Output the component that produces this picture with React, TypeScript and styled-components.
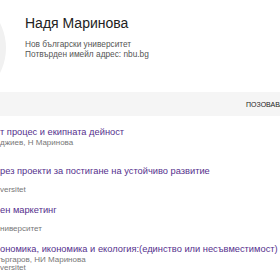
import React from "react";
import styled, { createGlobalStyle } from "styled-components";

const Global = createGlobalStyle`
  html, body { margin: 0; padding: 0; background: #fff; }
  body { font-family: "Liberation Sans", Arial, sans-serif; overflow: hidden; width: 280px; height: 280px; }
`;

const Page = styled.div`
  width: 280px;
  height: 280px;
  overflow: hidden;
  background: #fff;
`;

const Header = styled.div`
  display: flex;
  align-items: flex-start;
  height: 92px;
`;

const Avatar = styled.div`
  flex: none;
  width: 110px;
  height: 110px;
  border-radius: 50%;
  background: #f1f1f1;
  margin-left: -104px;
  margin-top: -7px;
`;

const Info = styled.div`
  margin-left: 19px;
  padding-top: 15px;
  display: flex;
  flex-direction: column;
`;

const Name = styled.div`
  font-size: 14px;
  line-height: 17px;
  color: #222;
  margin-bottom: 7px;
`;

const InfoLine = styled.div`
  font-size: 8.3px;
  line-height: 10px;
  color: #555;
  white-space: nowrap;
`;

const Bar = styled.div`
  display: flex;
  align-items: center;
  height: 24px;
  background: #f5f5f5;
  margin-bottom: 5px;
`;

const BarSpacer = styled.div`
  flex: none;
  width: 246px;
`;

const BarLabel = styled.div`
  flex: none;
  font-size: 7px;
  color: #222;
  white-space: nowrap;
  text-transform: uppercase;
`;

const Row = styled.div`
  padding: 5px 0 5px;
  white-space: nowrap;
`;

const Title = styled.div`
  font-size: 9.3px;
  line-height: 13px;
  color: #55308d;
`;

const Gray = styled.div`
  font-size: 8px;
  line-height: 8px;
  height: 8px;
  color: #777;
`;

const rows = [
  { title: "т процес и екипната дейност", authors: "джиев, Н Маринова", venue: "" },
  { title: "рез проекти за постигане на устойчиво развитие", authors: "", venue: "versitet" },
  { title: "ен маркетинг", authors: "", venue: "ниверситет" },
  {
    title: "ономика, икономика и екология:(единство или несъвместимост)",
    authors: "ъргаров, НИ Маринова",
    venue: "versitet",
  },
];

export default function App() {
  return (
    <Page>
      <Global />
      <Header>
        <Avatar />
        <Info>
          <Name>Надя Маринова</Name>
          <InfoLine>Нов български университет</InfoLine>
          <InfoLine>Потвърден имейл адрес: nbu.bg</InfoLine>
        </Info>
      </Header>
      <Bar>
        <BarSpacer />
        <BarLabel>Позовавания</BarLabel>
      </Bar>
      {rows.map((r, i) => (
        <Row key={i}>
          <Title>{r.title}</Title>
          <Gray>{r.authors}</Gray>
          <Gray>{r.venue}</Gray>
        </Row>
      ))}
    </Page>
  );
}
